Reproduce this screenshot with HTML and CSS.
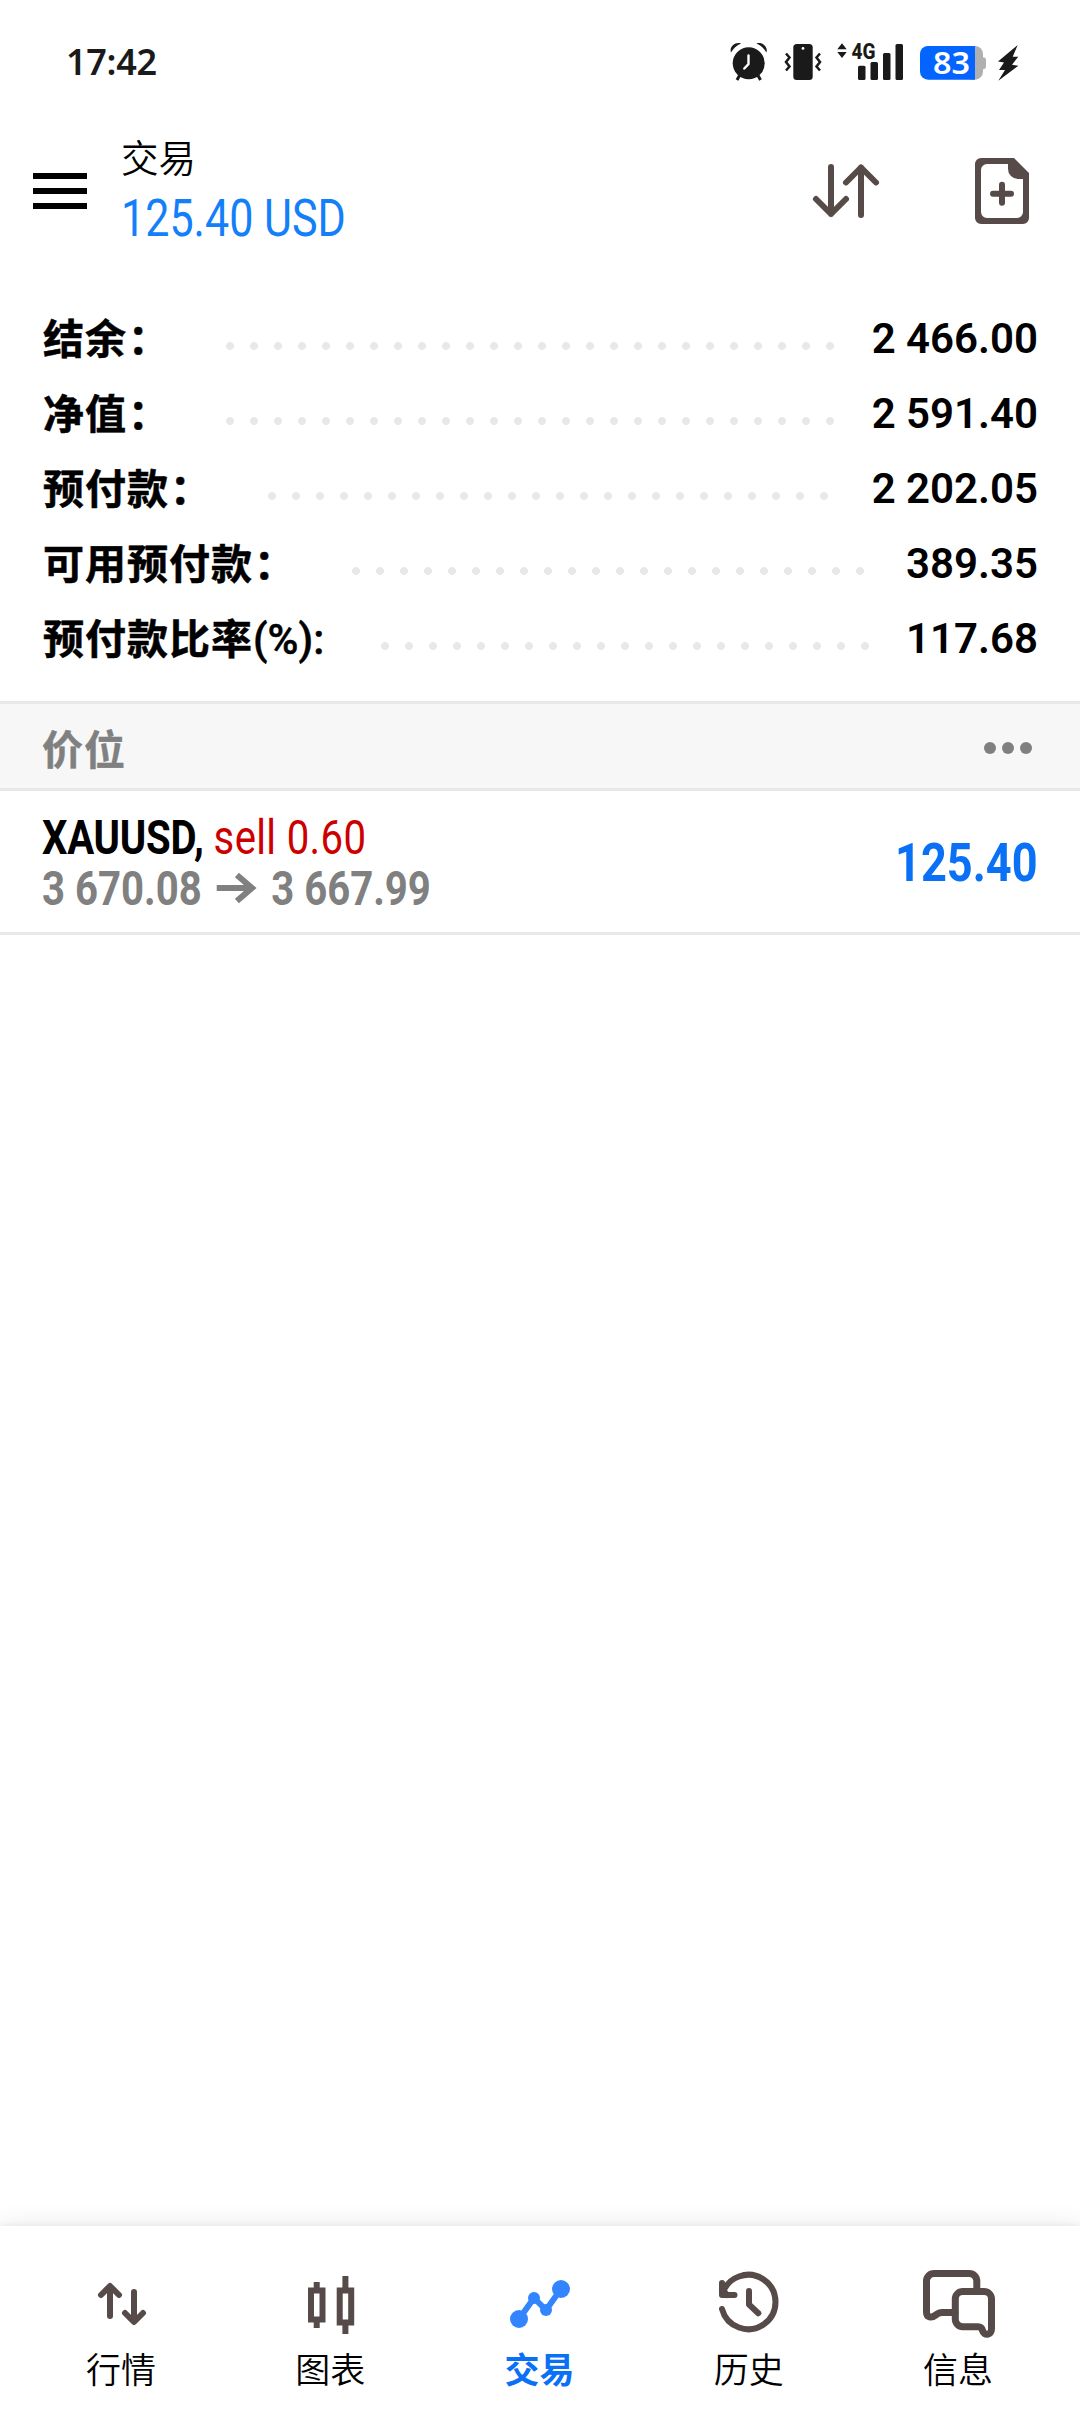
FILE: index.html
```html
<!DOCTYPE html>
<html lang="zh-CN">
<head>
  <meta charset="UTF-8">
  <title>交易</title>
  <link rel="stylesheet" href="styles.css">
</head>
<body>
  <div class="status-bar">
    <span class="clock">17:42</span>
    <div class="status-icons">
      <svg class="alarm" width="38" height="40" viewBox="0 0 38 40">
        <circle cx="18.7" cy="21.3" r="16"/>
        <path d="M1 10.5C-1 5 5 -.5 11 1.5 7 3 3.5 6 1 10.5zM36.4 10.5C38.4 5 32.4 -.5 26.4 1.5 30.4 3 33.9 6 36.4 10.5z"/>
        <path class="dark-line" d="M9.5 33.5L7 38M28 33.5L30.5 38"/>
        <path class="hands" d="M18.5 13.5V22L14.3 26.5"/>
      </svg>
      <svg class="vibrate" width="38" height="40" viewBox="0 0 38 40">
        <rect x="9.3" y="2" width="19.4" height="36" rx="3.5"/>
        <circle cx="19" cy="6.4" r="1.4" fill="#fff"/>
        <path class="zigzag" d="M2 11.5L5.5 15.5 2 20 5.5 24.5 2 28.5M36 11.5L32.5 15.5 36 20 32.5 24.5 36 28.5"/>
      </svg>
      <svg class="signal" width="68" height="40" viewBox="0 0 68 40">
        <path d="M1.3 7.3L6 1.3 10.7 7.3zM1.3 10L6 16 10.7 10z"/>
        <text x="15.5" y="16.7" textLength="24" lengthAdjust="spacingAndGlyphs">4G</text>
        <rect x="22" y="23.7" width="7.5" height="14.3" rx="1.5"/>
        <rect x="34.5" y="20" width="7.5" height="18" rx="1.5"/>
        <rect x="47" y="11" width="7.5" height="27" rx="1.5"/>
        <rect x="59.5" y="2" width="7.5" height="36" rx="1.5"/>
      </svg>
      <svg class="battery" width="66" height="40" viewBox="0 0 66 40">
        <path fill="#b0b0b0" d="M50 4H55A8 8 0 0 1 63 12V15.3Q66 15.5 66 18V24.5Q66 27 63 27.3V29.7A8 8 0 0 1 55 37.7H50z"/>
        <path fill="#0364ff" d="M8 4H55V37.7H8A8 8 0 0 1 0 29.7V12A8 8 0 0 1 8 4z"/>
        <text x="13" y="32.3" textLength="37" lengthAdjust="spacingAndGlyphs">83</text>
      </svg>
      <svg class="bolt" width="22" height="40" viewBox="0 0 22 40">
        <path d="M20.7 3L1 19.5 7 20.5 2 28H8L1.3 38.7 21.3 23.7 15 22.7 21.3 14.7H15.7z"/>
      </svg>
    </div>
  </div>

  <header class="app-bar">
    <div class="menu-btn"><span></span><span></span><span></span></div>
    <div class="titles">
      <h1>交易</h1>
      <div class="profit condensed">125.40 USD</div>
    </div>
    <svg class="sort" width="72" height="72" viewBox="0 0 72 72">
      <path d="M21 12V59M6 44L21 59 36 44M51 60V12.5M36 27.5L51 12.5 66 27.5"/>
    </svg>
    <svg class="new-order" width="72" height="72" viewBox="0 0 72 72">
      <path fill-rule="evenodd" d="M15 3H48L63 18V63A6 6 0 0 1 57 69H15A6 6 0 0 1 9 63V9A6 6 0 0 1 15 3zM21 9A6 6 0 0 0 15 15V57A6 6 0 0 0 21 63H51A6 6 0 0 0 57 57V24H52A10 10 0 0 1 42 14V9z"/>
      <path class="plus" d="M27 38.7H45M36 29.7V47.7"/>
    </svg>
  </header>

  <section class="summary">
    <div class="row"><span>结余<i class="colon">：</i></span><i class="dots"></i><b>2 466.00</b></div>
    <div class="row"><span>净值<i class="colon">：</i></span><i class="dots"></i><b>2 591.40</b></div>
    <div class="row"><span>预付款<i class="colon">：</i></span><i class="dots"></i><b>2 202.05</b></div>
    <div class="row"><span>可用预付款<i class="colon">：</i></span><i class="dots"></i><b>389.35</b></div>
    <div class="row"><span>预付款比率<em>(%):</em></span><i class="dots"></i><b>117.68</b></div>
  </section>

  <div class="section-head">
    <h2>价位</h2>
    <div class="more"><span></span><span></span><span></span></div>
  </div>

  <div class="position">
    <div class="details">
      <div class="symbol condensed"><b>XAUUSD,</b> <span class="sell">sell 0.60</span></div>
      <div class="prices condensed">
        <span>3 670.08</span>
        <svg width="47" height="32" viewBox="0 0 39 32" preserveAspectRatio="none"><path d="M0 16H36M20 3L35 16 20 29"/></svg>
        <span>3 667.99</span>
      </div>
    </div>
    <div class="result condensed">125.40</div>
  </div>

  <nav class="tabs">
    <div class="tab">
      <svg width="72" height="72" viewBox="0 0 72 72"><path d="M24 48V18.5M15 27L24 18 33 27M48 24V53.5M39 45L48 54 57 45"/></svg>
      <span>行情</span>
    </div>
    <div class="tab">
      <svg class="candles" width="72" height="72" viewBox="0 0 72 72">
        <path d="M16 22.5H27.5V51.5H16zM21.7 14V20M21.7 54V60M44.7 22.5H56.2V54.5H44.7zM50.4 8V20M50.4 57V66"/>
      </svg>
      <span>图表</span>
    </div>
    <div class="tab active">
      <svg width="72" height="72" viewBox="0 0 72 72">
        <path d="M15 51L30 30 42 42 57 21"/>
        <circle cx="15" cy="51" r="9"/><circle cx="30" cy="30" r="6"/><circle cx="42" cy="42" r="6"/><circle cx="57" cy="21" r="9"/>
      </svg>
      <span>交易</span>
    </div>
    <div class="tab">
      <svg width="72" height="72" viewBox="0 0 72 72">
        <path d="M9 15V27H21.5M9 27A27.2 27.2 0 1 1 9 41M36 23V36.5L45.3 45.3M9 21L14 27"/>
      </svg>
      <span>历史</span>
    </div>
    <div class="tab">
      <svg class="chat" width="72" height="72" viewBox="0 0 72 72">
        <path d="M54.8 23V13A7.5 7.5 0 0 0 47.3 5.5H12A7.5 7.5 0 0 0 4.5 13V44C4.5 50 10 50 13 47.5 16 45 17 44.5 20 44.5H33"/>
        <path d="M40.8 23.5H62A7.5 7.5 0 0 1 69.5 31V61C69.5 67.5 62 68 60.5 62.5 60 60 58.5 58.7 56 58.7H40.8A7.5 7.5 0 0 1 33.3 51.2V31A7.5 7.5 0 0 1 40.8 23.5z"/>
      </svg>
      <span>信息</span>
    </div>
  </nav>
</body>
</html>
```
FILE: styles.css
```css
* {
  box-sizing: border-box;
  margin: 0;
  padding: 0;
}
body {
  background: #fff;
  color: #000;
  font-family: Roboto, "Noto Sans CJK SC", sans-serif;
  height: 2412px;
  display: flex;
  flex-direction: column;
}
svg {
  display: block;
  flex: none;
  overflow: visible;
}
/* Roboto squeezed to condensed proportions */
.condensed {
  transform: scaleX(0.836);
  transform-origin: left center;
  white-space: nowrap;
}

/* status bar */
.status-bar {
  height: 124px;
  padding: 0 61px 0 66px;
  display: flex;
  justify-content: space-between;
  align-items: center;
}
.clock {
  font-family: "Noto Sans", sans-serif;
  font-weight: 650;
  font-size: 36px;
  line-height: 40px;
  letter-spacing: -0.3px;
  color: #1a1a1a;
}
.status-icons {
  display: flex;
  fill: #1a1a1a;
}
.alarm {
  margin-right: 16px;
}
.dark-line {
  stroke: #1a1a1a;
  stroke-width: 3;
}
.hands {
  fill: none;
  stroke: #fff;
  stroke-width: 2.4;
  stroke-linecap: round;
}
.vibrate {
  margin-right: 14px;
}
.zigzag {
  fill: none;
  stroke: #1a1a1a;
  stroke-width: 2.5;
}
.signal {
  margin-right: 16px;
}
.signal text {
  font-size: 22px;
  font-weight: 800;
}
.battery {
  margin-right: 11px;
}
.battery text {
  font-family: "Noto Sans", sans-serif;
  font-size: 31px;
  font-weight: 650;
  fill: #fff;
}

/* app bar */
.app-bar {
  height: 134px;
  padding: 0 42px 0 33px;
  display: flex;
  align-items: center;
}
.menu-btn {
  width: 54px;
  display: flex;
  flex-direction: column;
  gap: 9px;
}
.menu-btn span {
  height: 6px;
  background: #000;
}
.titles {
  flex: 1;
  margin-left: 34px;
}
.titles h1 {
  font-size: 37.5px;
  font-weight: 350;
  line-height: 56px;
}
.profit {
  font-size: 51.5px;
  line-height: 64px;
  color: #1380fa;
}
.sort {
  margin-right: 84px;
  fill: none;
  stroke: #564b48;
  stroke-width: 6;
  stroke-linecap: round;
  stroke-linejoin: round;
}
.new-order {
  fill: #564b48;
}
.plus {
  stroke: #564b48;
  stroke-width: 6;
  stroke-linecap: round;
}

/* account summary */
.summary {
  padding: 43px 42px 25px;
}
.row {
  height: 75px;
  display: flex;
  align-items: center;
  font-size: 42px;
  font-weight: 700;
  line-height: 75px;
  white-space: nowrap;
}
.row span {
  padding: 3px 0 0 1px;
  font-size: 41px;
  letter-spacing: 1px;
  -webkit-text-stroke: 0.5px;
}
.colon {
  font-style: normal;
  margin: 0 -1px 0 1px;
}
.row em {
  font-size: 42px;
  font-style: normal;
  font-weight: 500;
  letter-spacing: 0;
}
.row b {
  font-weight: 600;
}
.dots {
  flex: 1;
  height: 8px;
  margin: 15px 30px 0 41px;
  background: radial-gradient(circle at 20px 4px, #e8e8e8 3.6px, transparent 4.3px) 0 0 / 24px 8px repeat-x;
}

/* positions */
.section-head {
  height: 90px;
  padding: 0 48px 0 42px;
  display: flex;
  justify-content: space-between;
  align-items: center;
  background: #f7f7f7;
  border-top: 3px solid #e8e8e8;
  border-bottom: 3px solid #e8e8e8;
}
.section-head h2 {
  padding-top: 10px;
  font-size: 41px;
  letter-spacing: 1px;
  line-height: 60px;
  color: #808080;
  -webkit-text-stroke: 0.4px;
}
.more {
  display: flex;
  gap: 6px;
  margin-top: 4px;
}
.more span {
  width: 12px;
  height: 12px;
  border-radius: 50%;
  background: #808080;
}
.position {
  height: 144px;
  padding: 2px 42px 0;
  display: flex;
  justify-content: space-between;
  align-items: center;
  border-bottom: 3px solid #e8e8e8;
}
.symbol,
.prices {
  font-size: 48px;
  line-height: 51px;
}
.symbol b {
  letter-spacing: -0.3px;
}
.sell {
  color: #cc0000;
  letter-spacing: 0.4px;
}
.prices {
  display: flex;
  align-items: center;
  gap: 18px;
  font-weight: 700;
  color: #808080;
}
.prices path {
  fill: none;
  stroke: #808080;
  stroke-width: 6;
}
.result {
  font-size: 54px;
  font-weight: 700;
  color: #0a70f5;
  transform-origin: right center;
}

/* bottom navigation */
.tabs {
  height: 186px;
  margin-top: auto;
  padding: 42px 17px 0;
  display: flex;
  box-shadow: 0 0 26px rgba(0, 0, 0, 0.09), 0 -1px 6px rgba(0, 0, 0, 0.06);
}
.tab {
  flex: 1;
  display: flex;
  flex-direction: column;
  align-items: center;
  font-size: 35px;
  font-weight: 350;
  line-height: 52px;
}
.tab span {
  padding: 6px 1px 0 0;
}
.tab svg {
  fill: none;
  stroke: #564b48;
  stroke-width: 6;
  stroke-linecap: round;
  stroke-linejoin: round;
}
.tab .candles {
  stroke-linecap: butt;
  stroke-linejoin: miter;
}
.tab .chat {
  stroke-width: 7;
}
.active {
  color: #0a70f5;
  font-weight: 700;
}
.tab.active svg {
  stroke: #3385ff;
}
.active circle {
  fill: #3385ff;
  stroke: none;
}
```
